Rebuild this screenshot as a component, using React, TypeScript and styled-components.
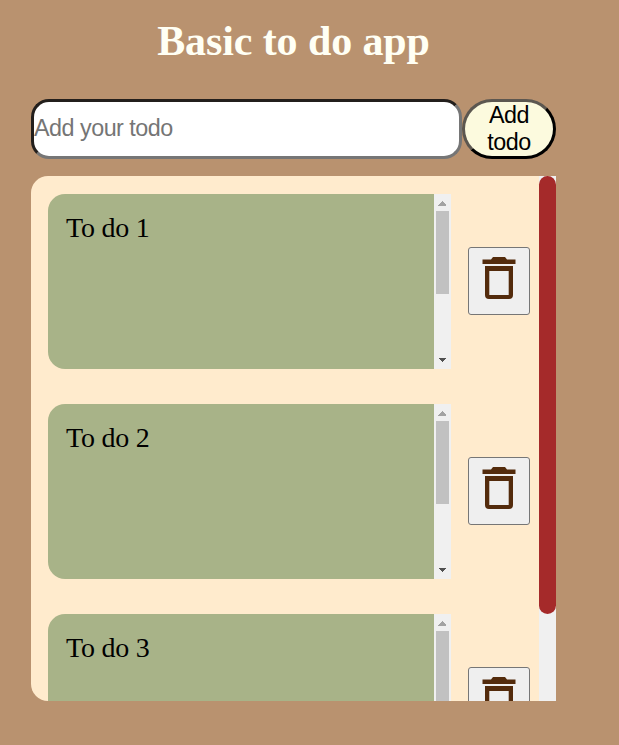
import React from 'react';
import styled, { createGlobalStyle } from 'styled-components';

const GlobalStyle = createGlobalStyle`
  * { box-sizing: border-box; }
  body {
    margin: 0;
    background: #b9926f;
    font-family: 'Liberation Serif', 'Times New Roman', serif;
    overflow: hidden;
  }
`;

const Page = styled.main`
  width: 525px;
  height: 745px;
  margin-left: 31px;
  display: flex;
  flex-direction: column;
`;

const Title = styled.h1`
  margin: 0;
  padding-top: 17px;
  height: 99px;
  font-size: 42px;
  line-height: 48px;
  font-weight: bold;
  letter-spacing: -0.1px;
  text-align: center;
  color: #fffff4;
`;

const Form = styled.form`
  display: flex;
  height: 60px;
  margin-bottom: 17px;
`;

const TodoInput = styled.input`
  width: 431px;
  height: 60px;
  padding: 0 0 2px;
  border: 3px solid;
  border-color: #231f1c #767676 #767676 #231f1c;
  border-radius: 18px;
  background: #fff;
  font: 23.33px 'Liberation Sans', Arial, sans-serif;
  letter-spacing: -0.5px;
  outline: none;
  &::placeholder { color: #757575; opacity: 1; }
`;

const AddButton = styled.button`
  width: 94px;
  height: 60px;
  padding: 0 12px;
  border: 3px solid;
  border-color: #5c5750 #000 #000 #5c5750;
  border-radius: 30px;
  background: #fcfade;
  color: #000;
  font: 23.33px/27px 'Liberation Sans', Arial, sans-serif;
  letter-spacing: -0.5px;
`;

const Panel = styled.section`
  display: flex;
  height: 525px;
  border-radius: 17px 0 0 17px;
  background: #ffebcd;
  overflow: hidden;
`;

const List = styled.ul`
  flex: 1;
  margin: 0;
  padding: 18px 9px 0 17px;
  display: flex;
  flex-direction: column;
  gap: 35px;
  list-style: none;
`;

const Row = styled.li`
  display: flex;
  flex: none;
  height: 175px;
  align-items: center;
  justify-content: space-between;
`;

const Card = styled.div`
  display: flex;
  width: 403px;
  height: 175px;
  border-radius: 17px 0 0 17px;
  background: #a8b388;
  overflow: hidden;
`;

const CardText = styled.p`
  flex: 1;
  margin: 0;
  padding: 18px;
  font-size: 28px;
  line-height: 32px;
  letter-spacing: -0.25px;
  color: #000;
`;

const CardScrollbar = styled.div`
  display: flex;
  flex-direction: column;
  align-items: center;
  width: 17px;
  background: #f0f0f0;
`;

const CardThumb = styled.div`
  width: 13px;
  height: 83px;
  margin-bottom: auto;
  background: #c1c1c1;
`;

const Arrow = styled.svg`
  display: block;
  flex: none;
  width: 17px;
  height: 17px;
`;

const PanelScrollbar = styled.div`
  width: 17px;
  background: #f0f0f0;
`;

const PanelThumb = styled.div`
  height: 438px;
  border-radius: 8.5px;
  background: #a52a2a;
`;

const DeleteButton = styled.button`
  display: flex;
  justify-content: center;
  width: 62px;
  height: 68px;
  margin-bottom: 2px;
  padding: 9px 0 0;
  border: 1px solid #767676;
  border-radius: 3px;
  background: #efefef;
`;

const TrashIcon = () => (
  <svg width="34" height="42" viewBox="0 0 34 42" fill="#532b0c" aria-hidden="true">
    <path d="M.5 2.5H9L11 0h12l2 2.5h8.5V7H.5Z" />
    <path
      fillRule="evenodd"
      d="M3 9h28v29q0 4-4 4H7q-4 0-4-4ZM7.3 14v24h19.4V14Z"
    />
  </svg>
);

const todos = ['To do 1', 'To do 2', 'To do 3'];

export default function App() {
  return (
    <>
      <GlobalStyle />
      <Page>
        <Title>Basic to do app</Title>
        <Form onSubmit={(event) => event.preventDefault()}>
          <TodoInput placeholder="Add your todo" />
          <AddButton>Add todo</AddButton>
        </Form>
        <Panel>
          <List>
            {todos.map((todo) => (
              <Row key={todo}>
                <Card>
                  <CardText>{todo}</CardText>
                  <CardScrollbar>
                    <Arrow viewBox="0 0 17 17" shapeRendering="crispEdges">
                      <path d="M4.5 11.5h8L8.5 7Z" fill="#a3a3a3" />
                    </Arrow>
                    <CardThumb />
                    <Arrow viewBox="0 0 17 17" shapeRendering="crispEdges">
                      <path d="M4.5 5.5h8L8.5 10Z" fill="#505050" />
                    </Arrow>
                  </CardScrollbar>
                </Card>
                <DeleteButton type="button" aria-label={`Delete ${todo}`}>
                  <TrashIcon />
                </DeleteButton>
              </Row>
            ))}
          </List>
          <PanelScrollbar>
            <PanelThumb />
          </PanelScrollbar>
        </Panel>
      </Page>
    </>
  );
}
